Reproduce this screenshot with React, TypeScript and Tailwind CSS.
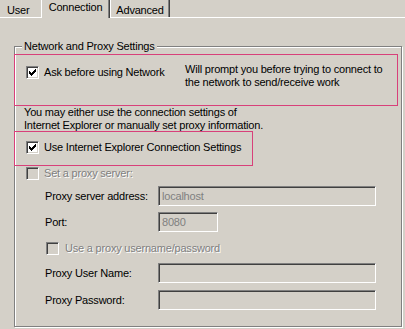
import type { ReactNode } from "react";

const face = "bg-[#d4d0c8]";
const disabledText = "text-[#808080] [text-shadow:1px_1px_0_#fff]";

function Check({ checked, disabled }: { checked?: boolean; disabled?: boolean }) {
  return (
    <span
      className={`block w-[13px] h-[13px] shrink-0 border-t border-l border-[#808080] border-r-white border-b-white border-r border-b shadow-[inset_1px_1px_0_#404040,inset_-1px_-1px_0_#d4d0c8] ${
        disabled ? face : "bg-white"
      }`}
    >
      {checked && (
        <svg width="13" height="13" viewBox="0 0 13 13" className="-mt-px -ml-px" shapeRendering="crispEdges">
          <path
            fill="#000"
            d="M9 3h1v1h-1zM8 4h2v1h-2zM3 5h1v1h-1zM7 5h3v1h-3zM3 6h2v1h-2zM6 6h3v1h-3zM3 7h5v1h-5zM4 8h3v1h-3zM5 9h1v1h-1z"
          />
        </svg>
      )}
    </span>
  );
}

function Field({ width, value }: { width: string; value?: string }) {
  return (
    <div
      className={`${width} h-[20px] ${face} border-t border-l border-[#808080] border-r border-b border-r-white border-b-white shadow-[inset_1px_1px_0_#404040] pl-[3px] leading-[18px] text-[#808080]`}
    >
      {value}
    </div>
  );
}

function FieldRow({ label, width, value, className }: { label: string; width: string; value?: string; className: string }) {
  return (
    <div className={`flex items-center pl-[30px] ${className}`}>
      <span className="w-[113px] shrink-0">{label}</span>
      <Field width={width} value={value} />
    </div>
  );
}

function Tab({ children, className }: { children: ReactNode; className: string }) {
  return <div className={`flex justify-center ${className}`}>{children}</div>;
}

export default function App() {
  return (
    <div
      className={`w-[405px] h-[329px] overflow-hidden ${face} text-[11px] leading-[13px] tracking-[-0.2px] text-black`}
      style={{ fontFamily: '"Liberation Sans", Arial, sans-serif' }}
    >
      {/* Tabs */}
      <div className="flex items-end h-[17px]">
        <Tab className="w-[41px] h-[17px] pt-[4px] !justify-start pl-[7px]">User</Tab>
        <Tab className={`relative z-10 w-[69px] h-[18px] -mb-px ${face} border-l border-white border-r border-r-[#404040] shadow-[inset_-1px_0_0_#808080] pt-px`}>
          Connection
        </Tab>
        <Tab className="w-[60px] h-[17px] pt-[4px] border-l border-white border-r border-r-[#404040] shadow-[inset_-1px_0_0_#808080]">
          Advanced
        </Tab>
      </div>

      {/* Panel */}
      <div className="border-t border-white h-[312px] pt-[28px]">
        <div className="ml-[14px] w-[388px] h-[281px] border border-[#808080] shadow-[inset_1px_1px_0_#fff,1px_1px_0_#fff]">
          <div className={`-mt-[7px] ml-[7px] px-[2px] h-[13px] w-fit ${face}`}>Network and Proxy Settings</div>

          <div className="-ml-px mt-px w-[384px] h-[52px] border border-[#d8407a] flex items-start">
            <div className="w-[170px] pl-[11px] pt-[11px] flex items-center gap-[5px]">
              <Check checked />
              <span>Ask before using Network</span>
            </div>
            <div className="pt-[8px]">
              Will prompt you before trying to connect to
              <br />
              the network to send/receive work
            </div>
          </div>

          <div className="pl-[9px] h-[25px]">
            You may either use the connection settings of
            <br />
            Internet Explorer or manually set proxy information.
          </div>

          <div className="-ml-px w-[239px] h-[35px] border border-[#d8407a] pl-[11px] pt-[9px]">
            <div className="flex items-center gap-[5px]">
              <Check checked />
              <span>Use Internet Explorer Connection Settings</span>
            </div>
          </div>

          <div className="mt-[1px] pl-[11px] flex items-center gap-[5px]">
            <Check disabled />
            <span className={disabledText}>Set a proxy server:</span>
          </div>

          <FieldRow className="mt-[6px]" label="Proxy server address:" width="w-[218px]" value="localhost" />
          <FieldRow className="mt-[6px]" label="Port:" width="w-[60px]" value="8080" />

          <div className="mt-[10px] pl-[31px] flex items-center gap-[6px]">
            <Check disabled />
            <span className={disabledText}>Use a proxy username/password</span>
          </div>

          <FieldRow className="mt-[8px]" label="Proxy User Name:" width="w-[218px]" />
          <FieldRow className="mt-[7px]" label="Proxy Password:" width="w-[218px]" />
        </div>
      </div>
    </div>
  );
}
